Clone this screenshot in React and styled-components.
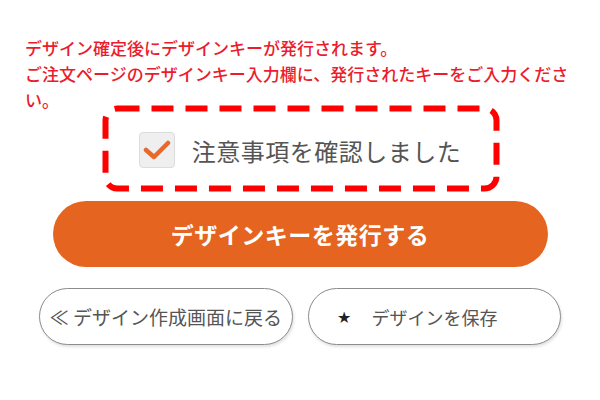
import React from "react";
import styled, { createGlobalStyle } from "styled-components";

const Global = createGlobalStyle`
  html, body { margin: 0; padding: 0; background: #ffffff; }
  body { font-family: "Noto Sans CJK JP", "Noto Sans", sans-serif; }
`;

const Page = styled.div`
  width: 600px;
  height: 400px;
  box-sizing: border-box;
  padding-top: 35px;
  display: flex;
  flex-direction: column;
  align-items: center;
`;

const Notice = styled.p`
  margin: 0;
  align-self: flex-start;
  margin-left: 25px;
  width: 552px;
  font-size: 17px;
  line-height: 26px;
  font-weight: 500;
  color: #eb1c2d;
`;

const ConfirmRow = styled.label`
  position: relative;
  margin-top: 17px;
  display: inline-flex;
  align-items: center;
  gap: 17px;
  height: 40px;
  cursor: pointer;
`;

const Box = styled.span`
  width: 36px;
  height: 36px;
  box-sizing: border-box;
  border: 1px solid #dcdcdc;
  border-radius: 4px;
  background: #efefef;
  display: flex;
  align-items: center;
  justify-content: center;
`;

const ConfirmText = styled.span`
  font-size: 24px;
  color: #555555;
  letter-spacing: 0.5px;
`;

const Highlight = styled.svg`
  position: absolute;
  left: -37px;
  top: -25px;
  width: 398px;
  height: 87px;
  pointer-events: none;
  overflow: visible;
`;

const IssueButton = styled.button`
  margin-top: 31px;
  width: 495px;
  height: 66px;
  border: none;
  border-radius: 33px;
  background: #e5641f;
  color: #ffffff;
  font-family: inherit;
  font-size: 23px;
  font-weight: 700;
  letter-spacing: 0.5px;
  cursor: pointer;
`;

const ButtonRow = styled.div`
  margin-top: 21px;
  display: flex;
  gap: 15px;
`;

const OutlineButton = styled.button`
  position: relative;
  width: ${(p) => p.$w}px;
  height: 57px;
  box-sizing: border-box;
  border: 1px solid #8c8c8c;
  border-radius: 29px;
  background: #ffffff;
  box-shadow: 1px 2px 3px rgba(0, 0, 0, 0.12);
  color: #555555;
  font-family: inherit;
  font-size: ${(p) => p.$fs}px;
  display: flex;
  align-items: center;
  justify-content: center;
  padding: 0;
  cursor: pointer;
`;

const Star = styled.span`
  position: absolute;
  left: 28px;
  top: 50%;
  transform: translateY(-50%);
  font-size: 16px;
  color: #222222;
  font-family: "DejaVu Sans", sans-serif;
`;

export default function App() {
  return (
    <>
      <Global />
      <Page>
        <Notice>
          デザイン確定後にデザインキーが発行されます。
          <br />
          ご注文ページのデザインキー入力欄に、発行されたキーをご入力ください。
        </Notice>
        <ConfirmRow>
          <Box>
            <svg width="28" height="22" viewBox="0 0 28 22">
              <path
                d="M3 11 L11 18 L25 4"
                fill="none"
                stroke="#e8692a"
                strokeWidth="4.5"
                strokeLinecap="round"
                strokeLinejoin="round"
              />
            </svg>
          </Box>
          <ConfirmText>注意事項を確認しました</ConfirmText>
          <Highlight viewBox="0 0 398 87">
            <rect
              x="3.5"
              y="3.5"
              width="391"
              height="80"
              rx="12"
              fill="none"
              stroke="#ff0000"
              strokeWidth="6"
              strokeDasharray="22 12"
            />
          </Highlight>
        </ConfirmRow>
        <IssueButton>デザインキーを発行する</IssueButton>
        <ButtonRow>
          <OutlineButton $w={254} $fs={19}>≪ デザイン作成画面に戻る</OutlineButton>
          <OutlineButton $w={253} $fs={18}>
            <Star>★</Star>
            デザインを保存
          </OutlineButton>
        </ButtonRow>
      </Page>
    </>
  );
}
